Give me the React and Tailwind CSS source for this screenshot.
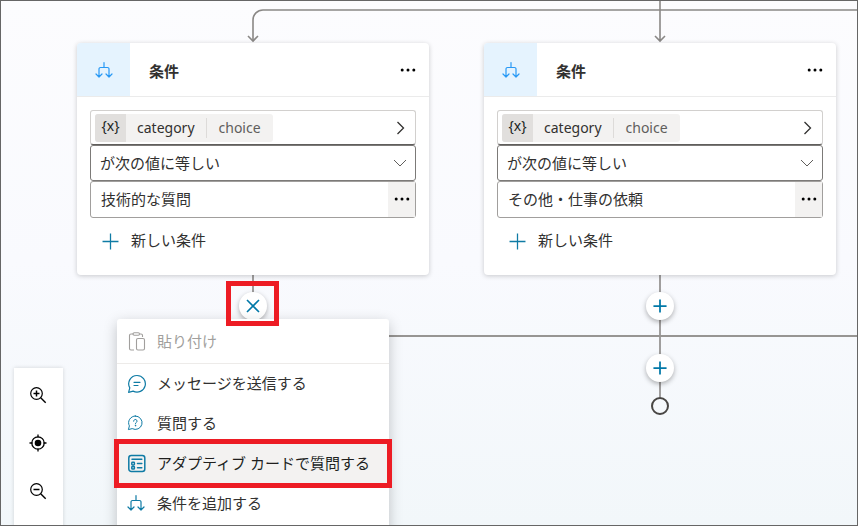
import React from "react";

function BranchIcon({ className }) {
  return (
    <svg viewBox="0 0 18 18" className={className} fill="none" stroke="currentColor" strokeWidth="1.2" strokeLinecap="round" strokeLinejoin="round" aria-hidden="true">
      <path d="M9 1.5v5M4 15.800V8A1.500 1.500 0 0 1 5.500 6.500h7A1.500 1.500 0 0 1 14 8v7.800M1 13l3 3 3-3M11 13l3 3 3-3" />
    </svg>
  );
}

function DotsIcon() {
  return (
    <svg viewBox="0 0 16 4" className="h-1 w-4" fill="currentColor" aria-hidden="true">
      <circle cx="2.200" cy="2" r="1.500" />
      <circle cx="8" cy="2" r="1.500" />
      <circle cx="13.800" cy="2" r="1.500" />
    </svg>
  );
}

function PlusIcon({ className, strokeWidth }) {
  return (
    <svg viewBox="0 0 16 16" className={className} fill="none" stroke="currentColor" strokeWidth={strokeWidth} aria-hidden="true">
      <path d="M8 0.500v15M0.500 8h15" />
    </svg>
  );
}

function PasteIcon() {
  return (
    <svg viewBox="0 0 20 20" className="size-5" fill="none" stroke="currentColor" strokeWidth="1.100" strokeLinejoin="round" aria-hidden="true">
      <path d="M7 19H4a1.500 1.500 0 0 1-1.500-1.500V4.500A1.500 1.500 0 0 1 4 3h2.500M12.500 3H14a1.500 1.500 0 0 1 1.500 1.500V6" />
      <rect x="6" y="1.800" width="6.500" height="2.400" rx="1.200" />
      <rect x="9.500" y="7.500" width="8" height="11.500" rx="1.500" />
    </svg>
  );
}

function MessageIcon() {
  return (
    <svg viewBox="0 0 20 20" className="size-5" fill="none" stroke="currentColor" strokeWidth="1.200" strokeLinecap="round" strokeLinejoin="round" aria-hidden="true">
      <path d="M10 1.500a8.300 8.300 0 1 1-3.900 15.600L1.600 18.300l1.200-4.400A8.300 8.300 0 0 1 10 1.500Z" />
      <path d="M7 8.300h6M7 11.500h4" />
    </svg>
  );
}

function QuestionIcon() {
  return (
    <svg viewBox="0 0 16 16" className="size-4" fill="none" stroke="currentColor" strokeWidth="1" strokeLinecap="round" strokeLinejoin="round" aria-hidden="true">
      <path d="M8.300 1a6.700 6.700 0 1 1-3.100 12.600L1.400 14.600l1-3.700A6.700 6.700 0 0 1 8.300 1Z" />
      <path d="M6.600 6.200a1.700 1.700 0 1 1 2.700 1.300c-.6.400-.9.700-.9 1.400" />
      <circle cx="8.400" cy="10.700" r="0.300" fill="currentColor" />
    </svg>
  );
}

function FormIcon() {
  return (
    <svg viewBox="0 0 20 20" className="size-5" fill="none" stroke="currentColor" strokeWidth="1.500" strokeLinecap="round" aria-hidden="true">
      <rect x="1.800" y="2.500" width="16" height="16" rx="2.500" />
      <path d="M5 6.200h9.800M10.500 10.500h4.300M10.500 14.800h4.300" />
      <rect x="4.800" y="9.300" width="2.600" height="2.600" rx="0.700" />
      <rect x="4.800" y="13.500" width="2.600" height="2.600" rx="0.700" />
    </svg>
  );
}

function MagnifierIcon({ plus }) {
  return (
    <svg viewBox="0 0 18 18" className="size-[18px]" fill="none" stroke="currentColor" strokeWidth="1.200" aria-hidden="true">
      <circle cx="7.500" cy="7.500" r="5.800" />
      <path d="M11.700 11.700l5 5" strokeWidth="1.400" />
      <path d="M4.500 7.500h6" strokeWidth="1.500" />
      {plus && <path d="M7.500 4.500v6" strokeWidth="1.500" />}
    </svg>
  );
}

function TargetIcon() {
  return (
    <svg viewBox="0 0 18 18" className="size-[18px]" fill="none" stroke="currentColor" strokeWidth="1.300" aria-hidden="true">
      <circle cx="9" cy="9" r="6.200" />
      <circle cx="9" cy="9" r="3.300" fill="currentColor" stroke="none" />
      <path d="M9 0.500v3M9 14.500v3M0.500 9h3M14.500 9h3" />
    </svg>
  );
}

function ConditionCard({ value, className }) {
  return (
    <section className={`w-[352px] rounded bg-white shadow-[0_1px_5px_rgba(0,0,0,0.2)] ${className}`}>
      <header className="flex h-[54px] items-center overflow-hidden rounded-t border-b border-[#ebebeb]">
        <div className="flex h-full w-[53px] items-center justify-center bg-[#e5f3fe] text-[#2899f5]">
          <BranchIcon className="size-[18px]" />
        </div>
        <h2 className="ml-[19px] flex-1 pt-[3px] text-[15px] font-bold">条件</h2>
        <button type="button" aria-label="その他のオプション" className="mr-[13px] flex h-8 items-center text-black">
          <DotsIcon />
        </button>
      </header>
      <div className="px-[13px] pt-[13px] pb-[19px]">
        <button type="button" className="flex h-[35px] w-full items-center rounded-[3px] border border-[#d2d0ce] border-b-[#605e5c] pr-2 pl-1">
          <span className="flex h-7 items-center rounded-[3px] bg-[#f3f2f1] text-sm">
            <span className="flex h-full w-[31px] items-center justify-center rounded-l-[3px] bg-[#e1dfdd] pb-1 text-[#201f1e]">{"{x}"}</span>
            <span className="px-[11px]">category</span>
            <span className="border-l border-[#dddbd9] px-3 text-[#605e5c]">choice</span>
          </span>
          <svg viewBox="0 0 12 16" className="ml-auto h-4 w-3" fill="none" stroke="currentColor" strokeWidth="1.300" aria-hidden="true">
            <path d="M2.500 2l6 6-6 6" />
          </svg>
        </button>
        <div className="grid h-9 items-center rounded-[3px] border border-[#7c7a78]">
          <select aria-label="演算子" className="col-start-1 row-start-1 h-full w-full appearance-none bg-transparent px-[9px] text-[15px]">
            <option>が次の値に等しい</option>
          </select>
          <svg viewBox="0 0 16 16" className="pointer-events-none col-start-1 row-start-1 mr-[7px] size-4 justify-self-end" fill="none" stroke="#605e5c" strokeWidth="1" aria-hidden="true">
            <path d="M2 5l6 6 6-6" />
          </svg>
        </div>
        <div className="flex h-[37px] items-stretch rounded-[3px] border border-[#a19f9d]">
          <input aria-label="値" defaultValue={value} className="min-w-0 flex-1 bg-transparent px-[10px] text-[15px]" />
          <button type="button" aria-label="値のオプション" className="flex w-[27px] items-center justify-center bg-[#f3f2f1] pb-[2px] text-black">
            <DotsIcon />
          </button>
        </div>
        <button type="button" className="mt-[6px] ml-3 flex h-8 items-center gap-3 text-[15px]">
          <PlusIcon className="mt-[2px] size-[17px] text-[#0f7ba5]" strokeWidth="1.200" />
          新しい条件
        </button>
      </div>
    </section>
  );
}

function NodeButton({ label, className, children }) {
  return (
    <button type="button" aria-label={label} className={`absolute flex size-7 items-center justify-center rounded-full bg-white text-[#0078a8] shadow-[0_2px_5px_rgba(0,0,0,0.3)] ${className}`}>
      {children}
    </button>
  );
}

function MenuItem({ icon, children, className = "h-10" }) {
  return (
    <li role="none">
      <button type="button" role="menuitem" className={`flex w-full items-center gap-[10px] pl-[10px] text-left text-[15px] ${className}`}>
        <span className="w-5 text-[#0f7ba5]">{icon}</span>
        {children}
      </button>
    </li>
  );
}

function Connectors() {
  return (
    <svg className="absolute inset-0 h-full w-full" fill="none" stroke="#8a8886" strokeWidth="1.600" aria-hidden="true">
      <line x1="262" y1="9" x2="100%" y2="9" />
      <path d="M262 9a10 10 0 0 0-10 10v21" />
      <path d="M247 35l5 5 5-5" />
      <path d="M659 0v40M654 35l5 5 5-5" />
      <path d="M252 274v18M659 274v122" />
      <line x1="387" y1="335" x2="100%" y2="335" strokeWidth="2" stroke="#979593" />
      <circle cx="659" cy="405" r="8" stroke="#484644" strokeWidth="2" />
    </svg>
  );
}

export default function App() {
  return (
    <main className="relative h-screen w-full overflow-hidden border border-[#666666] bg-linear-to-b from-[#fcfcfe] via-[#f9fafe] to-[#f2f7fa] font-['Noto_Sans','Noto_Sans_CJK_JP',sans-serif] text-[#323130]">
      <Connectors />
      <ConditionCard value="技術的な質問" className="absolute top-[42px] left-[76px]" />
      <ConditionCard value="その他・仕事の依頼" className="absolute top-[42px] left-[483px]" />

      <NodeButton label="閉じる" className="top-[291px] left-[238px]">
        <svg viewBox="0 0 14 14" className="size-[14px]" fill="none" stroke="currentColor" strokeWidth="1.600" aria-hidden="true">
          <path d="M1 1l12 12M13 1L1 13" />
        </svg>
      </NodeButton>
      <NodeButton label="ノードの追加" className="top-[291px] left-[645px]">
        <PlusIcon className="size-[14px]" strokeWidth="2" />
      </NodeButton>
      <NodeButton label="ノードの追加" className="top-[353px] left-[645px]">
        <PlusIcon className="size-[14px]" strokeWidth="2" />
      </NodeButton>

      <aside aria-label="ズーム" className="absolute top-[367px] left-[13px] flex w-[49px] flex-col items-center bg-white pt-[3px] pr-px pb-10 shadow-[0_0_4px_rgba(0,0,0,0.15)]">
        <button type="button" aria-label="拡大" className="flex size-12 items-center justify-center text-black"><MagnifierIcon plus /></button>
        <button type="button" aria-label="表示をリセット" className="flex size-12 items-center justify-center text-black"><TargetIcon /></button>
        <button type="button" aria-label="縮小" className="flex size-12 items-center justify-center text-black"><MagnifierIcon /></button>
      </aside>

      <ul role="menu" className="absolute top-[318px] left-[116px] w-[272px] rounded-[3px] bg-white pb-10 shadow-[0_4px_14px_rgba(0,0,0,0.22)]">
        <MenuItem className="h-[45px] border-b border-[#edebe9] text-[#a19f9d]" icon={<span className="text-[#a19f9d]"><PasteIcon /></span>}>貼り付け</MenuItem>
        <MenuItem className="h-[39px]" icon={<MessageIcon />}>メッセージを送信する</MenuItem>
        <MenuItem icon={<QuestionIcon />}>質問する</MenuItem>
        <MenuItem className="h-10 bg-[#f3f2f1] text-[#201f1e]" icon={<FormIcon />}>アダプティブ カードで質問する</MenuItem>
        <MenuItem icon={<BranchIcon className="size-[18px]" />}>条件を追加する</MenuItem>
      </ul>

      <div className="pointer-events-none absolute top-[280px] left-[225px] h-[45px] w-[53px] border-5 border-[#ed1c24]" />
      <div className="pointer-events-none absolute top-[438px] left-[113px] h-[49px] w-[278px] border-5 border-[#ed1c24]" />
    </main>
  );
}
